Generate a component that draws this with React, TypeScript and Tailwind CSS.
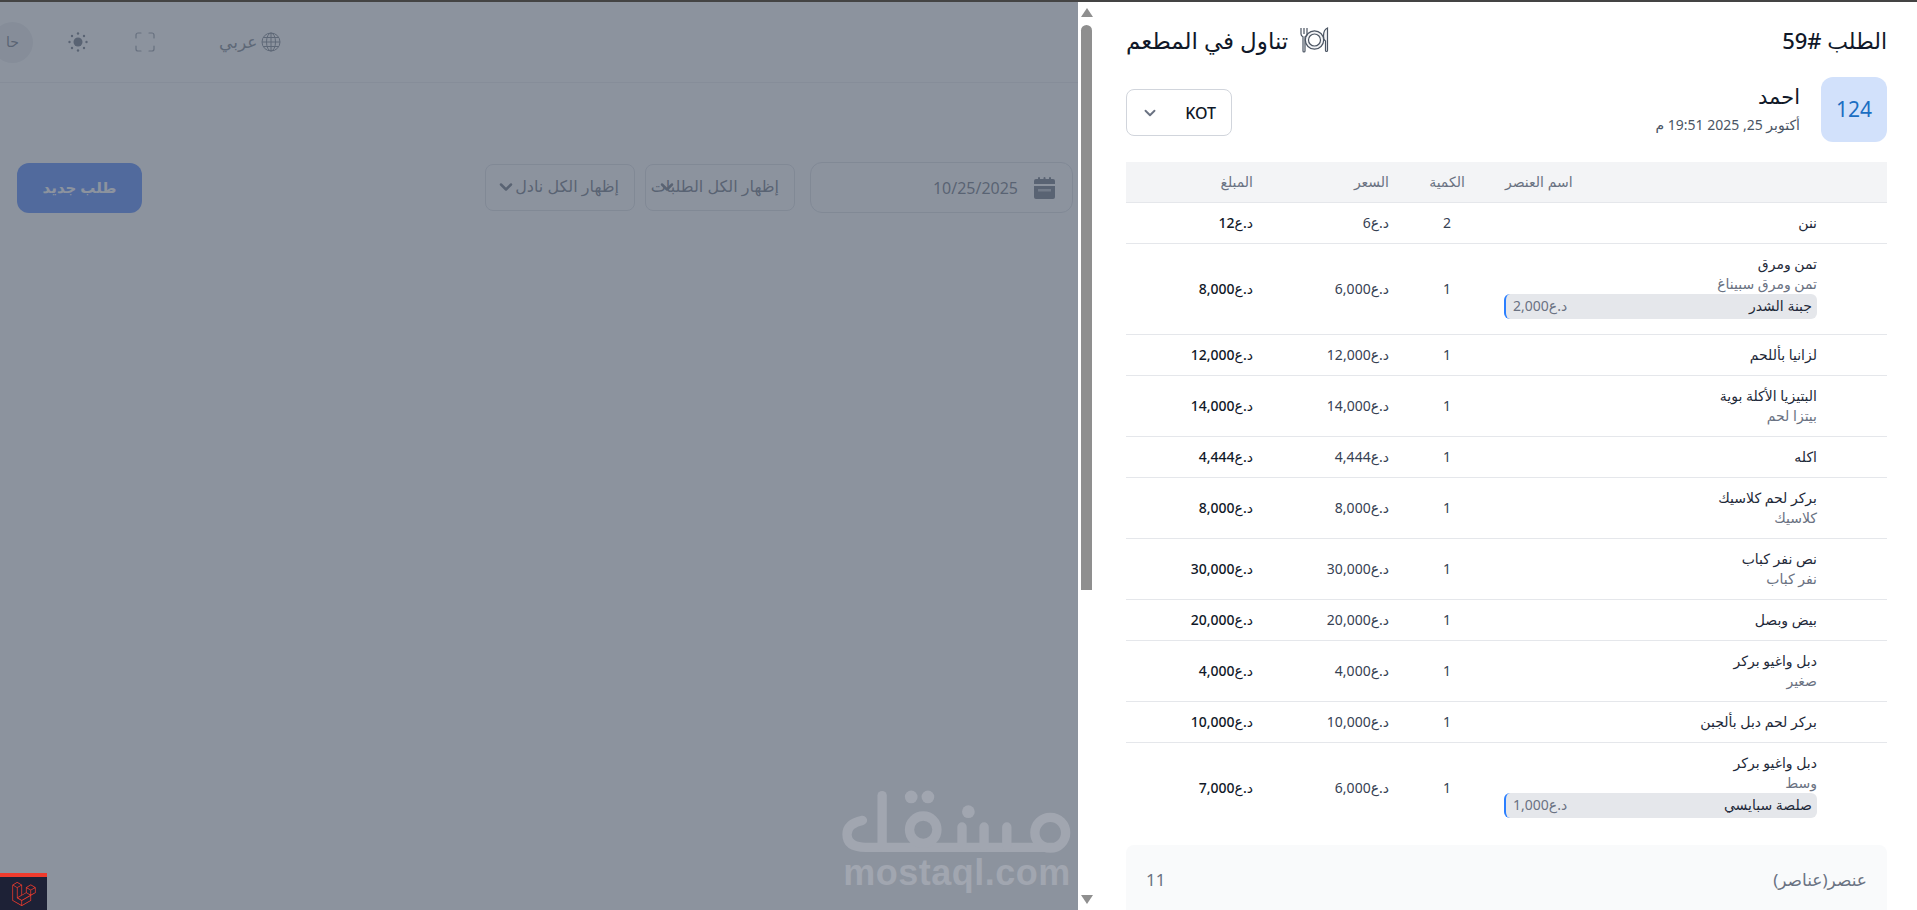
import React from 'react';
import { ChevronDown, Maximize } from 'lucide-react';
import { FaLaravel } from 'react-icons/fa';

type Row = {
  name: string;
  sub?: string;
  extra?: { name: string; price: string };
  qty: number;
  price: string;
  amount: string;
};

const ROWS: Row[] = [
  { name: 'ننن', qty: 2, price: '6', amount: '12' },
  { name: 'تمن ومرق', sub: 'تمن ومرق سبيناغ', extra: { name: 'جبنة الشدر', price: '2,000' }, qty: 1, price: '6,000', amount: '8,000' },
  { name: 'لزانيا بأللحم', qty: 1, price: '12,000', amount: '12,000' },
  { name: 'البتيزيا الأكلة بوية', sub: 'بيتزا لحم', qty: 1, price: '14,000', amount: '14,000' },
  { name: 'اكله', qty: 1, price: '4,444', amount: '4,444' },
  { name: 'بركر لحم كلاسيك', sub: 'كلاسيك', qty: 1, price: '8,000', amount: '8,000' },
  { name: 'نص نفر كباب', sub: 'نفر كباب', qty: 1, price: '30,000', amount: '30,000' },
  { name: 'بيض وبصل', qty: 1, price: '20,000', amount: '20,000' },
  { name: 'دبل واغيو بركر', sub: 'صغير', qty: 1, price: '4,000', amount: '4,000' },
  { name: 'بركر لحم دبل بألجبن', qty: 1, price: '10,000', amount: '10,000' },
  { name: 'دبل واغيو بركر', sub: 'وسط', extra: { name: 'صلصة سبايسي', price: '1,000' }, qty: 1, price: '6,000', amount: '7,000' },
];

function GlobeIcon() {
  return (
    <svg width="20" height="20" viewBox="0 0 20 20" fill="none" stroke="currentColor" strokeWidth="1">
      <circle cx="10" cy="10" r="9" />
      <ellipse cx="10" cy="10" rx="4.500" ry="9" />
      <path d="M10 1v18M1 10h18M2.300 5.500h15.400M2.300 14.500h15.400" />
    </svg>
  );
}

function SunIcon() {
  return (
    <svg width="20" height="20" viewBox="0 0 20 20" className="text-gray-700" fill="currentColor">
      <circle cx="10" cy="10" r="4.500" />
      <circle cx="10" cy="1.500" r="1.200" />
      <circle cx="10" cy="18.500" r="1.200" />
      <circle cx="1.500" cy="10" r="1.200" />
      <circle cx="18.500" cy="10" r="1.200" />
      <circle cx="4" cy="4" r="1.200" />
      <circle cx="16" cy="4" r="1.200" />
      <circle cx="4" cy="16" r="1.200" />
      <circle cx="16" cy="16" r="1.200" />
    </svg>
  );
}

function CalendarIcon() {
  return (
    <svg width="21" height="22" viewBox="0 0 21 22" className="text-gray-700" fill="currentColor">
      <rect x="4" y="0" width="2" height="4" rx="1" />
      <rect x="9.500" y="0" width="2" height="4" rx="1" />
      <rect x="15" y="0" width="2" height="4" rx="1" />
      <path d="M2 2h17a2 2 0 0 1 2 2v3H0V4a2 2 0 0 1 2-2z" />
      <path d="M0 9h21v11a2 2 0 0 1-2 2H2a2 2 0 0 1-2-2z" />
      <rect x="4" y="12" width="13" height="2.500" fill="#9ca3af" />
    </svg>
  );
}

function DishIcon() {
  return (
    <svg width="29" height="26" viewBox="0 0 29 26" fill="none" stroke="#4b5563" strokeWidth="1.200">
      <circle cx="14.500" cy="13" r="9.200" fill="#f3f4f6" />
      <circle cx="14.500" cy="13" r="6" fill="#fff" />
      <path d="M1 1v6c0 1.500 1 2.400 2 2.800V24a1 1 0 0 0 2 0V9.800c1-.4 2-1.300 2-2.800V1M4 1v6" />
      <path d="M27.500 1c-2.500 1-4 4-4 8 0 3 1 4.500 2 5v9.500a1 1 0 0 0 2 0z" fill="#f3f4f6" />
    </svg>
  );
}

function MostaqlMark() {
  return (
    <svg width="232" height="64" viewBox="186 75 694 190" fill="none" stroke="#a1a6b0" strokeWidth="28" strokeLinecap="round" strokeLinejoin="round">
      <path d="M250 168Q204 178 204 210Q204 249 260 249H820" />
      <path d="M309 94V249" />
      <circle cx="432" cy="196" r="41" />
      <path d="M548 188V245M614 188V245M682 188V245" />
      <circle cx="812" cy="205" r="46" />
      <g fill="#a1a6b0" stroke="none">
        <circle cx="396" cy="98" r="19" />
        <circle cx="446" cy="98" r="19" />
        <circle cx="567" cy="142" r="19" />
      </g>
    </svg>
  );
}

function Filter({ label, chevronClass }: { label: string; chevronClass: string }) {
  return (
    <div className="relative h-[47px] w-[150px] overflow-hidden rounded-lg border border-gray-300 pr-[15px] pt-[9px] text-base whitespace-nowrap text-gray-700">
      {label}
      <ChevronDown size={20} strokeWidth={3} className={chevronClass} />
    </div>
  );
}

function OrderPage() {
  return (
    <div dir="rtl" className="relative flex-1 overflow-hidden bg-white">
      <header className="flex h-[81px] items-center justify-end border-b border-gray-200">
        <div className="ml-[62px] flex items-center gap-1 text-[17px] text-gray-600">
          <GlobeIcon />
          <span>عربي</span>
        </div>
        <Maximize size={24} strokeWidth={1.2} className="ml-[45px] text-gray-500" />
        <div className="ml-[35px]"><SunIcon /></div>
        <div className="-ml-[8px] flex h-[41px] w-[41px] items-center justify-center rounded-full bg-gray-200 text-sm text-gray-700">حا</div>
      </header>
      <div className="flex items-center gap-[10px] pt-[79px] pr-[5px]">
        <div className="ml-[5px] flex h-[51px] w-[263px] items-center gap-4 rounded-xl border border-gray-300 pr-[17px] text-base text-gray-700">
          <CalendarIcon />
          <span>10/25/2025</span>
        </div>
        <Filter label="إظهار الكل الطلبات" chevronClass="absolute left-[11px] top-[12px] text-gray-700" />
        <Filter label="إظهار الكل نادل" chevronClass="absolute left-[10px] top-[12px] text-gray-700" />
        <div className="mr-auto ml-[17px] flex h-[50px] w-[125px] items-center justify-center rounded-xl bg-blue-600 text-[15px] font-bold text-white">طلب جديد</div>
      </div>
      {/* backdrop of the drawer */}
      <div className="absolute inset-0 bg-[#666f7e]/75" />
      <div dir="ltr" className="absolute right-[5px] bottom-[17px] flex flex-col items-center font-['Liberation_Sans',sans-serif]">
        <MostaqlMark />
        <div className="text-[36px] leading-[40px] font-bold tracking-[0.5px] text-[#a1a6b0]">mostaql.com</div>
      </div>
      <div className="absolute bottom-0 left-0 flex h-[37px] w-[47px] items-center justify-center border-t-4 border-[#ef3b2d] bg-[#1d2136] text-[#ef3b2d]">
        <FaLaravel size={24} />
      </div>
    </div>
  );
}

function Scrollbar() {
  return (
    <div className="flex w-[17px] flex-col items-center bg-white py-[6px]">
      <div className="h-0 w-0 border-x-[6px] border-b-[9px] border-x-transparent border-b-[#8f8f8f]" />
      <div className="mt-[8px] h-[565px] w-[11px] rounded-t-full rounded-b-sm bg-[#8f8f8f]" />
      <div className="mt-auto h-0 w-0 border-x-[6px] border-t-[9px] border-x-transparent border-t-[#8f8f8f]" />
    </div>
  );
}

function ItemRow({ row }: { row: Row }) {
  return (
    <tr className="border-b border-gray-200 text-sm text-gray-800 last:border-b-0">
      <td className="py-[10px] pr-[70px] pl-[15px] align-middle">
        <div className="leading-5">{row.name}</div>
        {row.sub && <div className="leading-5 text-gray-500">{row.sub}</div>}
        {row.extra && (
          <div className="mb-[5px] flex h-[25px] items-center justify-between rounded-md border-l-2 border-blue-500 bg-gray-200 pr-[5px] pl-[7px]">
            <span>{row.extra.name}</span>
            <span className="text-gray-500">د.ع{row.extra.price}</span>
          </div>
        )}
      </td>
      <td className="text-center text-gray-700">{row.qty}</td>
      <td className="pr-4 text-right text-gray-700">د.ع{row.price}</td>
      <td className="pr-4 text-right font-medium text-gray-900">د.ع{row.amount}</td>
    </tr>
  );
}

function OrderDrawer() {
  return (
    <div dir="rtl" className="h-full w-[822px] overflow-hidden bg-white pt-[23px] pr-[30px] pl-[31px]">
      <div className="flex h-[30px] items-center justify-between text-[22px] font-medium text-gray-900">
        <div>الطلب #59</div>
        <div className="flex items-center gap-3">
          <DishIcon />
          <span className="text-[23px]">تناول في المطعم</span>
        </div>
      </div>
      <div className="mt-[22px] flex items-center justify-between">
        <div className="flex items-center gap-[21px]">
          <div className="flex h-[65px] w-[66px] items-center justify-center rounded-xl bg-[#d2e1fb] text-[21px] text-[#1b6ec2]">124</div>
          <div className="pb-[3px]">
            <div className="mb-[5px] text-[21px] leading-7 font-medium text-gray-900">احمد</div>
            <div className="text-sm leading-5 text-gray-600">أكتوبر 25, 2025 19:51 م</div>
          </div>
        </div>
        <div className="mt-[6px] flex h-[47px] w-[106px] items-center justify-between rounded-lg border border-gray-300 pr-[15px] pl-[14px] text-base font-medium text-gray-900">
          <span>KOT</span>
          <ChevronDown size={18} strokeWidth={2.5} className="text-gray-500" />
        </div>
      </div>
      <table className="mt-[20px] w-full table-fixed">
        <colgroup>
          <col className="w-[398px]" />
          <col className="w-[84px]" />
          <col className="w-[136px]" />
          <col className="w-[143px]" />
        </colgroup>
        <thead>
          <tr className="h-[40px] border-b border-gray-200 bg-gray-100 text-sm text-gray-500">
            <th className="pl-4 text-left font-normal">اسم العنصر</th>
            <th className="text-center font-normal">الكمية</th>
            <th className="pr-4 text-right font-normal">السعر</th>
            <th className="pr-4 text-right font-normal">المبلغ</th>
          </tr>
        </thead>
        <tbody>
          {ROWS.map((row, i) => <ItemRow key={i} row={row} />)}
        </tbody>
      </table>
      <div className="mt-[12px] flex h-[80px] items-start justify-between rounded-lg bg-gray-50 px-5 pt-[22px] text-[17px] text-gray-500">
        <span>عنصر(عناصر)</span>
        <span>11</span>
      </div>
    </div>
  );
}

export default function App() {
  return (
    <div className="flex h-[910px] flex-col overflow-hidden font-['Noto_Sans','DejaVu_Sans',sans-serif]">
      <div className="h-[2px] bg-[#444444]" />
      <div className="flex min-h-0 flex-1">
        <OrderPage />
        <Scrollbar />
        <OrderDrawer />
      </div>
    </div>
  );
}
